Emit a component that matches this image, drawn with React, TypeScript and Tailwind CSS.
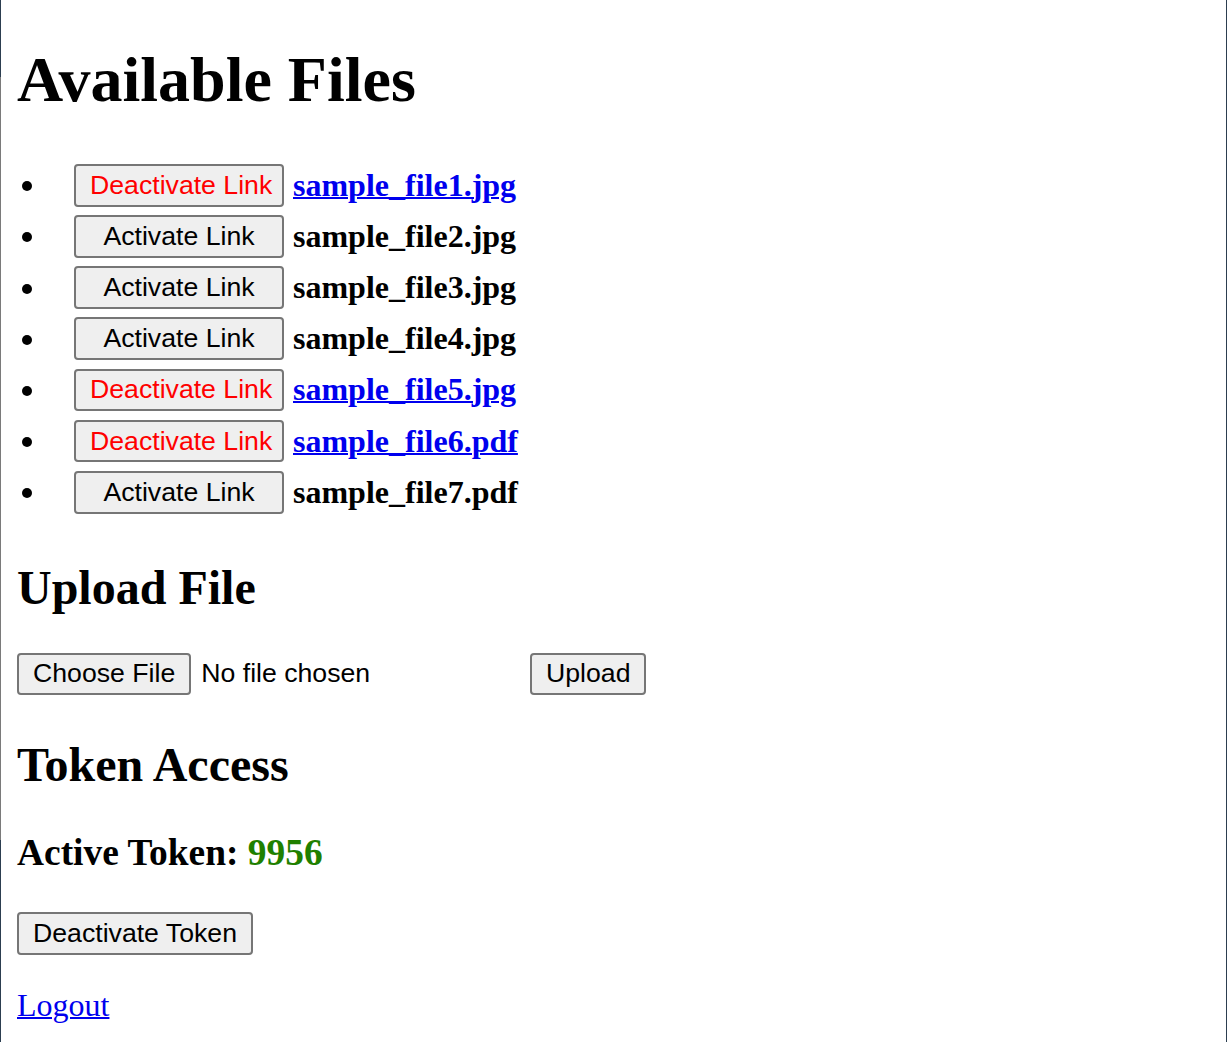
import React from "react";

const FILES = [
  { name: "sample_file1.jpg", active: true },
  { name: "sample_file2.jpg", active: false },
  { name: "sample_file3.jpg", active: false },
  { name: "sample_file4.jpg", active: false },
  { name: "sample_file5.jpg", active: true },
  { name: "sample_file6.pdf", active: true },
  { name: "sample_file7.pdf", active: false },
];

const btn =
  "h-[42.67px] rounded-[4px] border-2 border-[#767676] bg-[#efefef] px-[14px] text-[26.67px] leading-[normal] whitespace-nowrap font-['Liberation_Sans',Arial,sans-serif]";

export default function App() {
  return (
    <div className="flex min-h-[1042px] bg-white font-['Liberation_Serif','Times_New_Roman',serif] text-[32px] leading-[normal] text-black">
      {/* window edge */}
      <div className="flex w-px flex-col">
        <div className="h-[77px] bg-[#2c3e50]" />
        <div className="h-[763px] bg-[#7a7a7a]" />
        <div className="flex-1 bg-[#2c3e50]" />
      </div>

      <main className="flex-1 pl-4">
        <h1 className="mt-[42.88px] mb-[42.88px] text-[64px] font-bold leading-[normal]">Available Files</h1>

        <ul>
          {FILES.map((f) => (
            <li key={f.name} className="flex h-[51.17px] items-center">
              <span className="ml-[5px] mt-[2px] h-[10px] w-[10px] rounded-full bg-black" />
              <button
                className={`${btn} ml-[42px] w-[210px] text-center ${f.active ? "text-[#ff0000]" : "text-black"}`}
              >
                {f.active ? "Deactivate Link" : "Activate Link"}
              </button>
              {f.active ? (
                <a href="#" className="ml-[9px] font-bold text-[#0000ee] underline decoration-2">
                  {f.name}
                </a>
              ) : (
                <strong className="ml-[9px] font-bold">{f.name}</strong>
              )}
            </li>
          ))}
        </ul>

        <h2 className="mt-[41.84px] mb-[37.84px] text-[48px] font-bold leading-[normal]">Upload File</h2>

        <form className="flex items-center" onSubmit={(e) => e.preventDefault()}>
          <div className="flex w-[513px] items-center">
            <button type="button" className={btn}>Choose File</button>
            <span className="ml-[10px] text-[26.67px] font-['Liberation_Sans',Arial,sans-serif]">No file chosen</span>
          </div>
          <button type="submit" className={btn}>Upload</button>
        </form>

        <h2 className="mt-[41.84px] mb-[39.44px] text-[48px] font-bold leading-[normal]">Token Access</h2>

        <h3 className="mb-[33.44px] text-[37.44px] font-bold leading-[normal]">
          Active Token: <span className="text-[#1f8000]">9956</span>
        </h3>

        <div className="pt-[4px]">
          <button className={btn}>Deactivate Token</button>
        </div>

        <p className="mt-[32px]">
          <a href="#" className="text-[#0000ee] underline decoration-2">Logout</a>
        </p>
      </main>

      <div className="w-px bg-[#2c3e50]" />
    </div>
  );
}
